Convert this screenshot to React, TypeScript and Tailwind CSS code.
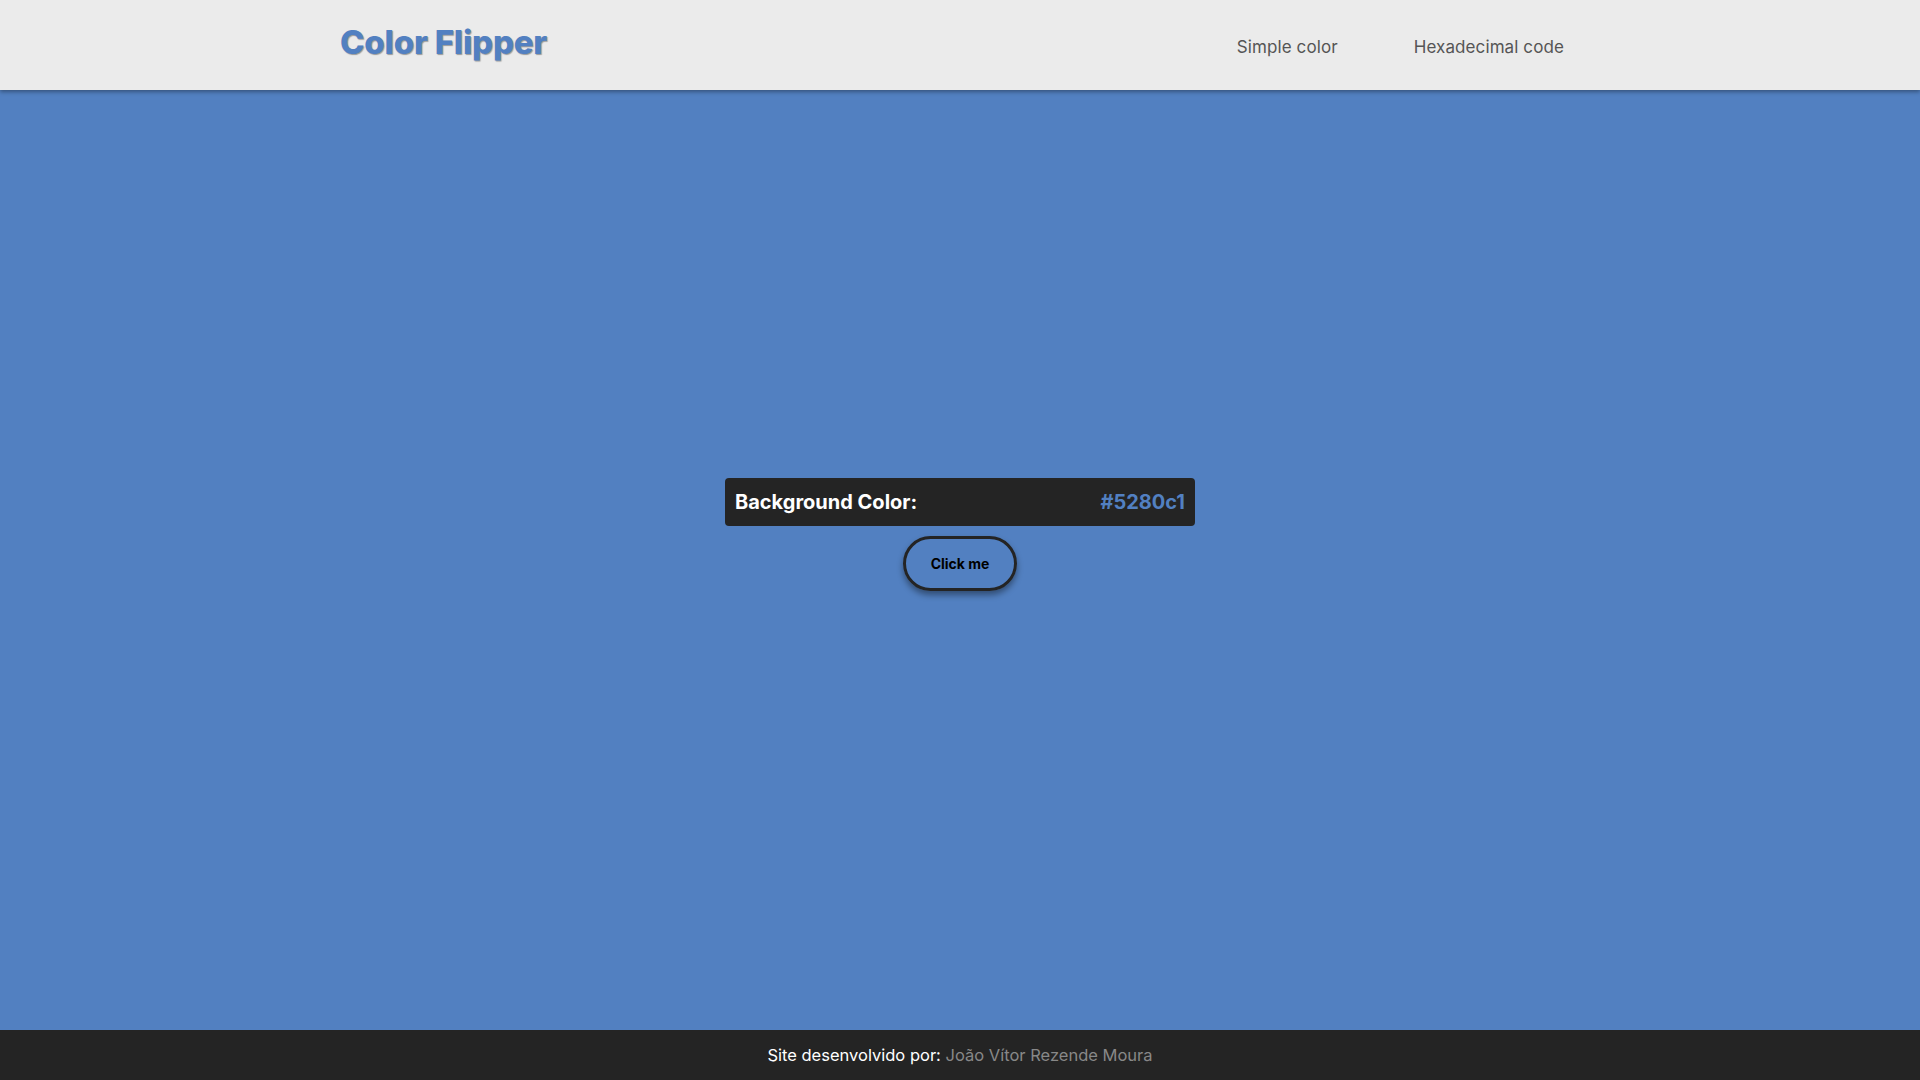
import { useState } from 'react'

const font = { fontFamily: 'Inter, "Open Sans", sans-serif' }

export default function App() {
  const [color] = useState('#5280c1')

  return (
    <div className="flex flex-col min-h-screen bg-[#5280c1]" style={font}>
      <header className="h-[90px] bg-[#ebebeb] shadow-[0_2px_4px_rgba(0,0,0,0.35)] relative z-10">
        <div className="w-[1240px] mx-auto h-full flex items-center justify-between pr-4">
          <h1 className="text-[33px] font-extrabold tracking-[-0.2px] text-[#5280c1] [text-shadow:1px_1px_1px_rgba(0,0,0,0.35)] pb-1">
            Color Flipper
          </h1>
          <nav className="flex items-center gap-[76px] text-[17px] tracking-[0.1px] text-[#555] pt-[5px]">
            <a>Simple color</a>
            <a>Hexadecimal code</a>
          </nav>
        </div>
      </header>

      <main className="flex-1 flex flex-col items-center justify-center pb-[51px]">
        <div className="w-[470px] h-12 bg-[#242424] rounded flex items-center justify-between px-[10px]">
          <span className="text-white text-[20px] font-bold">Background Color:</span>
          <span className="text-[#5280c1] text-[20px] font-bold">{color}</span>
        </div>
        <button className="mt-[10px] w-[114px] h-[55px] rounded-full border-[3px] border-[#242424] text-[14px] font-bold text-black shadow-[0_4px_6px_rgba(0,0,0,0.4)]">
          Click me
        </button>
      </main>

      <footer className="h-[50px] bg-[#242424] flex items-center justify-center text-[16.5px]">
        <span className="text-white">Site desenvolvido por:&nbsp;</span>
        <span className="text-[#888]">João Vítor Rezende Moura</span>
      </footer>
    </div>
  )
}
